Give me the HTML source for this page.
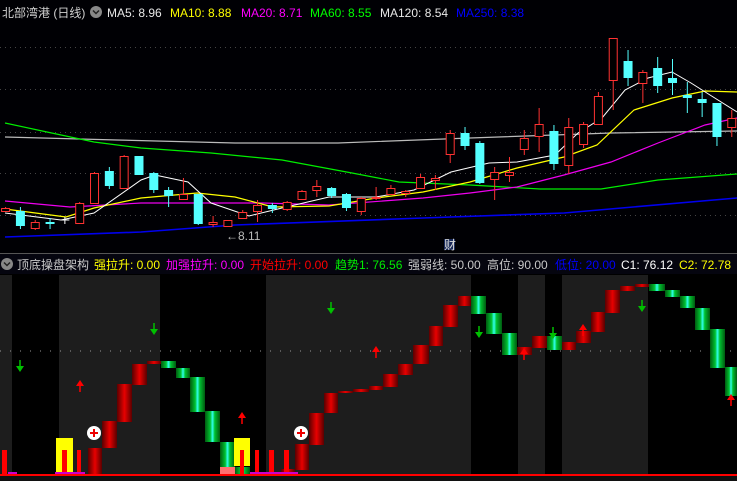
<!DOCTYPE html>
<html><head><meta charset="utf-8"><style>
html,body{margin:0;padding:0;background:#000;width:737px;height:481px;overflow:hidden}
svg{display:block}
text{font-family:"Liberation Sans","Noto Sans CJK SC",sans-serif;font-size:12px}
</style></head><body>
<svg id="s" width="737" height="481" xmlns="http://www.w3.org/2000/svg">
<defs>
<linearGradient id="rg" x1="0" x2="1" y1="0" y2="0"><stop offset="0" stop-color="#5a0000"/><stop offset="0.5" stop-color="#e80000"/><stop offset="1" stop-color="#5a0000"/></linearGradient>
<linearGradient id="gg" x1="0" x2="1" y1="0" y2="0"><stop offset="0" stop-color="#005a10"/><stop offset="0.35" stop-color="#00c030"/><stop offset="0.5" stop-color="#30ffee"/><stop offset="0.65" stop-color="#00c030"/><stop offset="1" stop-color="#005a10"/></linearGradient>
</defs>
<rect width="737" height="481" fill="#000004"/>
<g stroke="#444" stroke-dasharray="1,4" stroke-width="1">
<line x1="0" x2="737" y1="47.5" y2="47.5"/><line x1="0" x2="737" y1="89.5" y2="89.5"/><line x1="0" x2="737" y1="132.5" y2="132.5"/><line x1="0" x2="737" y1="173.5" y2="173.5"/><line x1="0" x2="737" y1="215.5" y2="215.5"/>
</g>
<text x="2" y="17" fill="#d0d0d0">北部湾港 (日线)</text>
<circle cx="96" cy="12" r="6" fill="#888"/><path d="M93 10.5 L96 13.5 L99 10.5" stroke="#222" stroke-width="1.5" fill="none"/>
<text x="107" y="17" fill="#e8e8e8">MA5: 8.96</text>
<text x="170" y="17" fill="#ffff00">MA10: 8.88</text>
<text x="241" y="17" fill="#ff00ff">MA20: 8.71</text>
<text x="310" y="17" fill="#00ff00">MA60: 8.55</text>
<text x="380" y="17" fill="#e8e8e8">MA120: 8.54</text>
<text x="456" y="17" fill="#0000ff">MA250: 8.38</text>
<g fill="none" stroke-width="1.2">
<polyline stroke="#bbb" points="5,137 117,140 235,143 338,143 470,138 611,133 737,131"/>
<polyline stroke="#00ee00" points="5,123 47,132 94,142 141,148 211,153 282,160 352,173 399,182 470,185 540,189 601,189 658,180 737,174"/>
<polyline stroke="#0000ee" stroke-width="1.6" points="5,237 141,232 235,225 423,218 564,213 737,198"/>
<polyline stroke="#ee00ee" points="5,201 70,207 141,203 263,203 329,205 423,198 470,193 517,187 564,175 611,162 658,143 705,125 737,118"/>
<polyline stroke="#ffff00" points="5,209 66,217 94,208 141,198 197,193 235,197 273,207 329,206 376,198 423,192 470,182 517,168 564,157 597,145 634,110 672,98 705,91 737,92"/>
<polyline stroke="#fff" stroke-width="1" points="5,213 61,220 94,213 141,180 155,175 188,182 211,203 249,216 282,208 329,197 376,197 414,190 451,172 489,163 517,162 555,155 578,133 602,118 625,90 648,78 672,72 691,83 710,95 737,112"/>
</g>
<g id="candles"></g>
<text x="226" y="240" fill="#bbb" font-size="12">←8.11</text>
<rect x="444" y="239" width="11" height="11" fill="#1a2a5a"/><text x="444" y="249" fill="#ddd" font-size="10">财</text>
<line x1="0" x2="737" y1="253.5" y2="253.5" stroke="#555"/>
<rect x="0" y="254" width="737" height="20" fill="#05050f"/>
<circle cx="7" cy="264" r="6" fill="#888"/><path d="M4 262.5 L7 265.5 L10 262.5" stroke="#222" stroke-width="1.5" fill="none"/>
<text x="17" y="269" fill="#c8c8c8">顶底操盘架构</text>
<text x="94" y="269" fill="#ffff00">强拉升: 0.00</text>
<text x="166" y="269" fill="#ff00ff">加强拉升: 0.00</text>
<text x="250" y="269" fill="#ff0000">开始拉升: 0.00</text>
<text x="335" y="269" fill="#00ee00">趋势1: 76.56</text>
<text x="408" y="269" fill="#c8c8c8">强弱线: 50.00</text>
<text x="487" y="269" fill="#c8c8c8">高位: 90.00</text>
<text x="555" y="269" fill="#0000ff">低位: 20.00</text>
<text x="621" y="269" fill="#ffffff">C1: 76.12</text>
<text x="679" y="269" fill="#ffff00">C2: 72.78</text>
<rect x="0" y="274" width="737" height="202" fill="#000"/>
<g fill="#1d1d1d">
<rect x="0" y="275" width="12" height="201"/><rect x="59" y="275" width="101" height="201"/><rect x="266" y="275" width="205" height="201"/><rect x="518" y="275" width="27" height="201"/><rect x="562" y="275" width="86" height="201"/>
</g>
<line x1="0" x2="737" y1="351" y2="351" stroke="#999" stroke-dasharray="1,9"/>
<g id="bars"></g>
<g fill="#ffff00"><rect x="56" y="438" width="17" height="38"/><rect x="234" y="438" width="16" height="28"/></g>
<rect x="220" y="467" width="15" height="9" fill="#ff7070"/>
<g fill="#ff0000">
<rect x="2" y="450" width="5" height="26"/><rect x="62" y="450" width="5" height="26"/><rect x="77" y="450" width="4" height="26"/><rect x="240" y="450" width="4" height="26"/><rect x="255" y="450" width="4" height="26"/><rect x="269" y="450" width="5" height="26"/><rect x="284" y="450" width="5" height="26"/>
</g>
<rect x="0" y="474" width="737" height="2" fill="#ff0000"/>
<g fill="#cc00cc"><rect x="8" y="472" width="9" height="2"/><rect x="55" y="472" width="30" height="2"/><rect x="250" y="472" width="48" height="2"/></g>
<rect x="0" y="476" width="737" height="5" fill="#101010"/>
<g id="arrows"></g>
<g><circle cx="94" cy="433" r="7" fill="#fff"/><path d="M90 433 H98 M94 429 V437" stroke="#e00" stroke-width="2"/>
<circle cx="301" cy="433" r="7" fill="#fff"/><path d="M297 433 H305 M301 429 V437" stroke="#e00" stroke-width="2"/></g>
</svg>
<script>
var NS="http://www.w3.org/2000/svg";
function el(p,t,a){var e=document.createElementNS(NS,t);for(var k in a)e.setAttribute(k,a[k]);p.appendChild(e);return e;}
var C=[[1,208,211,207,212,'r'],[2,211,226,207,229,'c'],[3,222,228,220,230,'r'],[4,222,224,218,229,'c'],[5,220,221,217,224,'x'],[6,203,223,202,223,'r'],[7,173,203,172,204,'r'],[8,171,186,167,189,'c'],[9,156,188,155,189,'r'],[10,156,175,156,175,'c'],[11,173,190,172,193,'c'],[12,190,196,187,207,'c'],[13,194,199,178,200,'r'],[14,194,224,194,225,'c'],[15,222,224,216,227,'r'],[16,220,226,220,227,'r'],[17,212,218,210,219,'r'],[18,205,211,200,222,'r'],[19,205,209,203,213,'c'],[20,202,209,201,211,'r'],[21,191,199,190,200,'r'],[22,186,190,180,197,'r'],[23,188,196,187,198,'c'],[24,194,208,193,211,'c'],[25,198,211,197,215,'r'],[26,197,198,187,200,'r'],[27,188,194,185,195,'r'],[28,191,193,190,197,'r'],[29,177,188,174,189,'r'],[30,178,180,175,190,'r'],[31,133,154,130,163,'r'],[32,133,146,127,150,'c'],[33,143,183,141,184,'c'],[34,172,179,167,200,'r'],[35,172,175,157,182,'r'],[36,138,149,130,155,'r'],[37,124,136,108,152,'r'],[38,131,164,125,170,'c'],[39,127,165,118,174,'r'],[40,124,144,122,148,'r'],[41,96,124,92,124,'r'],[42,38,80,38,110,'r'],[43,61,78,50,86,'c'],[44,72,83,70,103,'r'],[45,68,86,57,93,'c'],[46,78,83,59,95,'c'],[47,95,98,82,113,'c'],[48,99,103,92,117,'c'],[49,103,137,103,146,'c'],[50,118,127,110,137,'r']];
var g=document.getElementById('candles');
C.forEach(function(c){var x=5.6+(c[0]-1)*14.82;var col=c[5]=='c'?'#54ffff':(c[5]=='x'?'#fff':'#ff3232');
el(g,'line',{x1:x,x2:x,y1:c[3],y2:c[4],stroke:col,'stroke-width':1});
if(c[5]=='c')el(g,'rect',{x:x-4.5,y:c[1],width:9,height:Math.max(1,c[2]-c[1]),fill:col});
else if(c[5]=='x')el(g,'line',{x1:x-4.5,x2:x+4.5,y1:c[1],y2:c[1],stroke:col});
else el(g,'rect',{x:x-4,y:c[1]+0.5,width:8,height:Math.max(1,c[2]-c[1]),fill:'#000',stroke:col,'stroke-width':1});});
var B=[[88,102,448,476,'r'],[102,117,421,448,'r'],[117,132,384,422,'r'],[132,147,364,385,'r'],[147,161,361,364,'r'],[161,176,361,368,'g'],[176,190,368,378,'g'],[190,205,377,412,'g'],[205,220,411,442,'g'],[220,235,442,467,'g'],[235,250,467,476,'g'],[281,295,469,476,'r'],[295,309,444,470,'r'],[309,324,413,445,'r'],[324,338,393,413,'r'],[338,353,391,393,'r'],[353,369,389,392,'r'],[369,383,386,390,'r'],[383,398,374,387,'r'],[398,413,364,375,'r'],[413,429,345,364,'r'],[429,443,326,346,'r'],[443,458,305,327,'r'],[458,471,296,306,'r'],[471,486,296,314,'g'],[486,502,313,334,'g'],[502,517,333,355,'g'],[517,532,347,355,'r'],[532,547,336,348,'r'],[547,562,336,350,'g'],[562,576,342,350,'r'],[576,591,331,343,'r'],[591,605,312,332,'r'],[605,620,290,313,'r'],[620,635,286,291,'r'],[635,649,284,287,'r'],[649,665,284,291,'g'],[665,680,290,297,'g'],[680,695,296,308,'g'],[695,710,308,330,'g'],[710,725,329,368,'g'],[725,737,367,396,'g']];
var b=document.getElementById('bars');
B.forEach(function(r){el(b,'rect',{x:r[0],y:r[2],width:r[1]-r[0],height:r[3]-r[2],fill:r[4]=='r'?'url(#rg)':'url(#gg)'});});
var a=document.getElementById('arrows');
[[20,360],[154,323],[331,302],[479,326],[553,327],[642,300]].forEach(function(p){el(a,'path',{d:'M'+p[0]+' '+p[1]+' V'+(p[1]+8),stroke:'#00c000','stroke-width':1.5});el(a,'path',{d:'M'+(p[0]-4)+' '+(p[1]+6)+' L'+(p[0]+4)+' '+(p[1]+6)+' L'+p[0]+' '+(p[1]+12)+'Z',fill:'#00c000'});});
[[80,380],[242,412],[376,346],[524,348],[583,324],[731,394]].forEach(function(p){el(a,'path',{d:'M'+p[0]+' '+(p[1]+4)+' V'+(p[1]+12),stroke:'#ff0000','stroke-width':1.5});el(a,'path',{d:'M'+(p[0]-4)+' '+(p[1]+6)+' L'+(p[0]+4)+' '+(p[1]+6)+' L'+p[0]+' '+p[1]+'Z',fill:'#ff0000'});});
</script>
</body></html>
